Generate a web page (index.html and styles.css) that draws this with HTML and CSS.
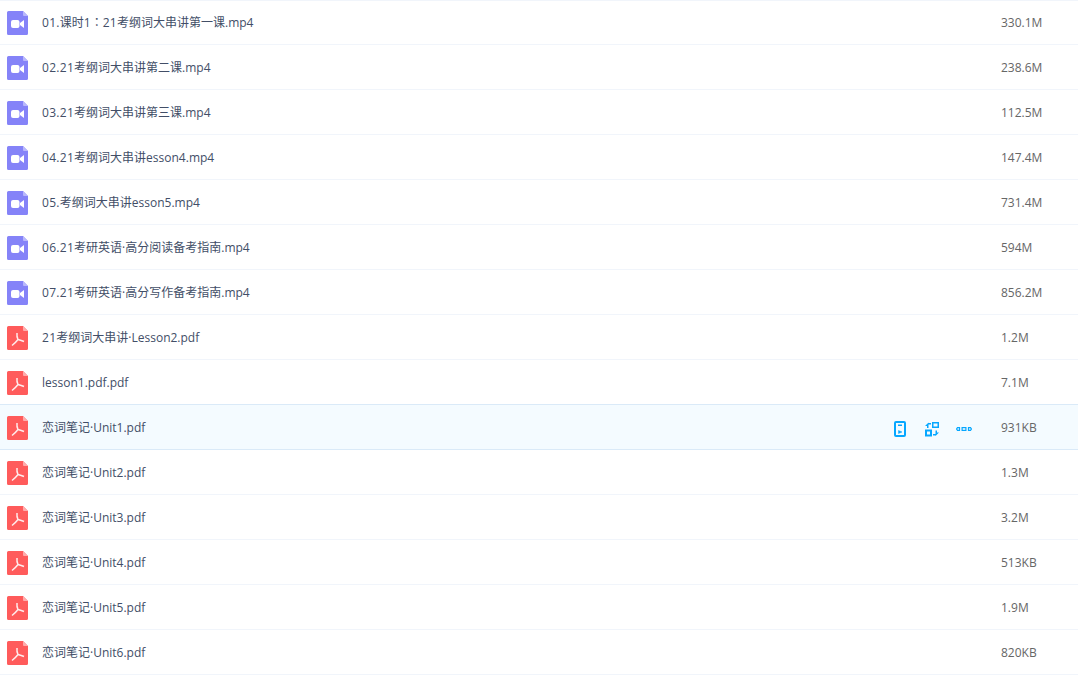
FILE: index.html
```html
<!DOCTYPE html>
<html lang="zh-CN">
<head>
<meta charset="utf-8">
<title>文件列表</title>
<link rel="stylesheet" href="styles.css">
</head>
<body>
<svg class="defs" width="0" height="0" aria-hidden="true">
  <defs>
    <symbol id="video" viewBox="0 0 21 24">
      <path d="M1.500 0H16L21 5V22.500A1.500 1.500 0 0 1 19.500 24H1.500A1.500 1.500 0 0 1 0 22.500V1.500A1.500 1.500 0 0 1 1.500 0Z" fill="#8583f8"/>
      <path d="M16 0L21 5H17A1 1 0 0 1 16 4Z" fill="#b9b8fc"/>
      <rect x="4" y="9" width="8.500" height="8" rx="2" fill="#fff"/>
      <path d="M13 12L17 9V17L13 14Z" fill="#fff"/>
    </symbol>
    <symbol id="pdf" viewBox="0 0 21 24">
      <path d="M1.500 0H16L21 5V22.500A1.500 1.500 0 0 1 19.500 24H1.500A1.500 1.500 0 0 1 0 22.500V1.500A1.500 1.500 0 0 1 1.500 0Z" fill="#ff5b5b"/>
      <path d="M16 0L21 5H17A1 1 0 0 1 16 4Z" fill="#ffacac"/>
      <path d="M10 7C9.700 9.500 10 11.500 11 13.500M11 13.500C9.500 15.500 7.500 17.500 5 19.500M11 13.500C13 14 15 14.600 17 15.500" fill="none" stroke="#ffecec" stroke-width="1.500"/>
    </symbol>
  </defs>
</svg>
<ul class="list">
  <li class="row"><svg class="ficon"><use href="#video"/></svg><span class="name"><span class="idx">01.</span>课时1<span class="colon" lang="zh-TW">：</span><span class="idx">21</span>考纲词大串讲第一课.mp4</span><span class="size">330.1M</span></li>
  <li class="row"><svg class="ficon"><use href="#video"/></svg><span class="name"><span class="idx">02.21</span>考纲词大串讲第二课.mp4</span><span class="size">238.6M</span></li>
  <li class="row"><svg class="ficon"><use href="#video"/></svg><span class="name"><span class="idx">03.21</span>考纲词大串讲第三课.mp4</span><span class="size">112.5M</span></li>
  <li class="row"><svg class="ficon"><use href="#video"/></svg><span class="name"><span class="idx">04.21</span>考纲词大串讲esson4.mp4</span><span class="size">147.4M</span></li>
  <li class="row"><svg class="ficon"><use href="#video"/></svg><span class="name"><span class="idx">05.</span>考纲词大串讲esson5.mp4</span><span class="size">731.4M</span></li>
  <li class="row"><svg class="ficon"><use href="#video"/></svg><span class="name"><span class="idx">06.21</span>考研英语·高分阅读备考指南.mp4</span><span class="size">594M</span></li>
  <li class="row"><svg class="ficon"><use href="#video"/></svg><span class="name"><span class="idx">07.21</span>考研英语·高分写作备考指南.mp4</span><span class="size">856.2M</span></li>
  <li class="row"><svg class="ficon"><use href="#pdf"/></svg><span class="name"><span class="idx">21</span>考纲词大串讲·Lesson2.pdf</span><span class="size">1.2M</span></li>
  <li class="row row-before-active"><svg class="ficon"><use href="#pdf"/></svg><span class="name">lesson1.pdf.pdf</span><span class="size">7.1M</span></li>
  <li class="row row-active"><svg class="ficon"><use href="#pdf"/></svg><span class="name">恋词笔记·Unit1.pdf</span>
    <span class="actions">
      <svg class="act" viewBox="0 0 16 16"><rect x="3" y="1" width="10" height="14" rx="1" fill="none" stroke="#06a7ff" stroke-width="2"/><rect x="6" y="3.500" width="4" height="1.500" fill="#06a7ff"/><path d="M6.500 9.500L10 11L6.500 12.500Z" fill="#06a7ff" stroke="#06a7ff" stroke-width=".5"/></svg>
      <svg class="act" viewBox="0 0 16 16"><rect x="8.750" y="1.750" width="5.500" height="4.500" fill="none" stroke="#06a7ff" stroke-width="1.500"/><rect x="2" y="9.500" width="5" height="5" fill="none" stroke="#06a7ff" stroke-width="2"/><path d="M7 3.500H4.500V7H3V5H1L4.500 1.500V2H7Z" fill="#06a7ff"/><path d="M9 13H11.500V9.500H13V11.500H15L11.500 15V14.500H9Z" fill="#06a7ff"/></svg>
      <svg class="act" viewBox="0 0 16 16"><path d="M3.500 6.600H1.500L.600 8L1.500 9.400H3.500Z" fill="none" stroke="#06a7ff" stroke-width="1.200"/><rect x="6.100" y="6.600" width="3.800" height="2.800" fill="none" stroke="#06a7ff" stroke-width="1.200"/><path d="M12.500 6.600H14.500L15.400 8L14.500 9.400H12.500Z" fill="none" stroke="#06a7ff" stroke-width="1.200"/></svg>
    </span>
    <span class="size">931KB</span></li>
  <li class="row"><svg class="ficon"><use href="#pdf"/></svg><span class="name">恋词笔记·Unit2.pdf</span><span class="size">1.3M</span></li>
  <li class="row"><svg class="ficon"><use href="#pdf"/></svg><span class="name">恋词笔记·Unit3.pdf</span><span class="size">3.2M</span></li>
  <li class="row"><svg class="ficon"><use href="#pdf"/></svg><span class="name">恋词笔记·Unit4.pdf</span><span class="size">513KB</span></li>
  <li class="row"><svg class="ficon"><use href="#pdf"/></svg><span class="name">恋词笔记·Unit5.pdf</span><span class="size">1.9M</span></li>
  <li class="row"><svg class="ficon"><use href="#pdf"/></svg><span class="name">恋词笔记·Unit6.pdf</span><span class="size">820KB</span></li>
</ul>
</body>
</html>
```

FILE: styles.css
```css
html, body {
  margin: 0;
  padding: 0;
  background: #fff;
  overflow: hidden;
}

.defs {
  position: absolute;
}

.list {
  list-style: none;
  margin: 0;
  padding: 0;
  font: 12px/16px "Open Sans", "Noto Sans CJK SC", sans-serif;
  color: #424e67;
}

.row {
  display: flex;
  align-items: center;
  height: 45px;
  box-sizing: border-box;
  padding-left: 7px;
  border-bottom: 1px solid #f1f5fb;
}

.row:first-child {
  box-shadow: inset 0 1px 0 #f1f5fb;
}

.row-before-active {
  border-bottom-color: #daeaf8;
}

.row-active {
  background: #f4fbff;
  border-bottom-color: #daeaf8;
}

.ficon {
  flex: none;
  width: 21px;
  height: 24px;
  margin-top: 2px;
}

.name {
  flex: 1;
  margin-left: 14px;
  padding-top: 1px;
  white-space: nowrap;
}

.idx {
  letter-spacing: 0.3px;
}

.colon {
  font-family: "Noto Sans CJK TC", sans-serif;
  line-height: 0;
  text-spacing-trim: space-all;
}

.actions {
  display: flex;
  gap: 16px;
  margin-right: 29px;
  padding-top: 4px;
}

.act {
  width: 16px;
  height: 16px;
}

.size {
  flex: none;
  width: 77px;
  padding-top: 1px;
  color: #666;
}
```
